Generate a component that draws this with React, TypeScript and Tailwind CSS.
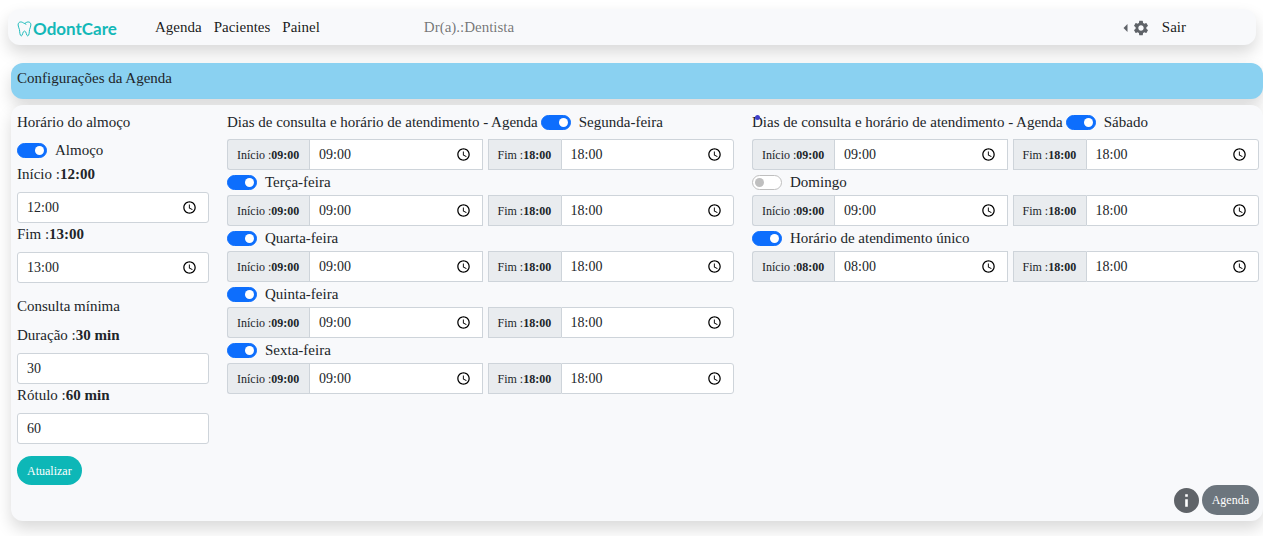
import { useState } from "react";
import { MdSchedule, MdSettings } from "react-icons/md";

interface Day {
  id: string;
  name: string;
  start: string;
  end: string;
  enabled: boolean;
}

const WEEK: Day[] = [
  { id: "seg", name: "Segunda-feira", start: "09:00", end: "18:00", enabled: true },
  { id: "ter", name: "Terça-feira", start: "09:00", end: "18:00", enabled: true },
  { id: "qua", name: "Quarta-feira", start: "09:00", end: "18:00", enabled: true },
  { id: "qui", name: "Quinta-feira", start: "09:00", end: "18:00", enabled: true },
  { id: "sex", name: "Sexta-feira", start: "09:00", end: "18:00", enabled: true },
];

const WEEKEND: Day[] = [
  { id: "sab", name: "Sábado", start: "09:00", end: "18:00", enabled: true },
  { id: "dom", name: "Domingo", start: "09:00", end: "18:00", enabled: false },
  { id: "unico", name: "Horário de atendimento único", start: "08:00", end: "18:00", enabled: true },
];

function Logo() {
  return (
    <a href="#" className="flex w-[138px] items-center gap-px pt-1 text-[#14b8b8]">
      <svg width="15" height="16" viewBox="0 0 15 17" fill="none" stroke="currentColor" strokeLinejoin="round">
        <path d="M7.5 2.6C6 2 5.2 1 3.600 1C1.800 1 .7 2.300.7 4.200c0 1.900 1 2.900 1.400 4.800.4 2 .3 6.700 1.900 6.900 1.700.1 1.300-5.200 3.500-5.200s1.800 5.300 3.500 5.200c1.600-.2 1.500-4.900 1.900-6.900.4-1.900 1.400-2.900 1.400-4.800C14.300 2.300 13.200 1 11.400 1 9.800 1 9 2 7.500 2.600Zm0 0 1.900 1" />
      </svg>
      <span className="font-[Lato,sans-serif] text-[17px] leading-5 font-bold">OdontCare</span>
    </a>
  );
}

function Switch({ id, label, defaultChecked }: { id: string; label: string; defaultChecked: boolean }) {
  const [on, setOn] = useState(defaultChecked);

  return (
    <div className="flex items-center gap-2">
      <span className="relative flex h-[15px] w-[30px]">
        <input
          id={id}
          type="checkbox"
          role="switch"
          checked={on}
          onChange={(e) => setOn(e.target.checked)}
          className="h-[15px] w-[30px] appearance-none rounded-full border border-[#bfbfbf] bg-white checked:border-[#0d6efd] checked:bg-[#0d6efd]"
        />
        <span
          className={`pointer-events-none absolute top-[3px] size-[9px] rounded-full ${
            on ? "right-[3px] bg-white" : "left-[3px] bg-[#bfbfbf]"
          }`}
        />
      </span>
      <label htmlFor={id}>{label}</label>
    </div>
  );
}

function TimeInput({ id, value, className = "" }: { id: string; value: string; className?: string }) {
  return (
    <div className={`flex h-[31px] min-w-0 items-center border border-[#ced4da] bg-white pr-[11px] ${className}`}>
      <input
        id={id}
        type="text"
        defaultValue={value}
        className="h-full w-full min-w-0 bg-transparent pl-[9px] text-sm outline-none"
      />
      <button type="button" aria-label="Escolher horário" className="shrink-0 text-black">
        <MdSchedule size={15} />
      </button>
    </div>
  );
}

function Addon({ htmlFor, text, value, className = "" }: { htmlFor: string; text: string; value: string; className?: string }) {
  return (
    <label
      htmlFor={htmlFor}
      className={`flex shrink-0 items-center border border-r-0 border-[#ced4da] bg-[#e9ecef] px-[9px] text-xs whitespace-pre ${className}`}
    >
      {text} :<b>{value}</b>
    </label>
  );
}

function DayRow({ day }: { day: Day }) {
  return (
    <div className="flex">
      <Addon htmlFor={`${day.id}-inicio`} text="Início" value={day.start} className="w-[82px] rounded-l-[3px]" />
      <TimeInput id={`${day.id}-inicio`} value={day.start} className="mr-[5px] flex-1" />
      <Addon htmlFor={`${day.id}-fim`} text="Fim" value={day.end} className="w-[73px]" />
      <TimeInput id={`${day.id}-fim`} value={day.end} className="flex-1 rounded-r-[3px]" />
    </div>
  );
}

function Schedule({ days, marker }: { days: Day[]; marker?: boolean }) {
  return (
    <section className="relative">
      {marker && <span className="absolute top-1 left-[3px] size-[5px] rounded-full bg-[#3f3fc8]" />}
      {days.map((day, i) => (
        <div key={day.id}>
          {i === 0 ? (
            <div className="mb-[5px] flex h-[23px] items-center gap-[3px] whitespace-nowrap">
              <h2>Dias de consulta e horário de atendimento - Agenda</h2>
              <Switch id={day.id} label={day.name} defaultChecked={day.enabled} />
            </div>
          ) : (
            <div className="flex h-[25px] items-center">
              <Switch id={day.id} label={day.name} defaultChecked={day.enabled} />
            </div>
          )}
          <DayRow day={day} />
        </div>
      ))}
    </section>
  );
}

export default function App() {
  const textInput = "block h-[31px] w-full rounded-[3px] border border-[#ced4da] bg-white px-[9px] text-sm outline-none";

  return (
    <div className="pt-[9px] pb-4 font-['Liberation_Serif',serif] text-[15px] leading-[23px] text-[#212529]">
      <nav className="mr-[7px] ml-2 flex h-9 items-center rounded-xl bg-[#f8f9fb] pr-[70px] pl-[9px] shadow-[0_8px_16px_rgba(0,0,0,0.15)]">
        <Logo />
        <div className="flex gap-3 text-black/90">
          <a href="#">Agenda</a>
          <a href="#">Pacientes</a>
          <a href="#">Painel</a>
        </div>
        <span className="ml-[104px] text-black/55">Dr(a).:Dentista</span>
        <div className="ml-auto flex items-center">
          <button type="button" aria-label="Configurações" className="flex items-center gap-1 pt-0.5 text-[#5f6368]">
            <svg width="5" height="8" viewBox="0 0 5 8" fill="currentColor">
              <path d="M4.500 0v8L.5 4Z" />
            </svg>
            <MdSettings size={18} />
          </button>
          <a href="#" className="ml-3 text-black/90">
            Sair
          </a>
        </div>
      </nav>

      <header className="mt-[18px] ml-[11px] h-9 rounded-xl bg-[#8ad1f1] px-1.5 pt-1 shadow-[0_8px_16px_rgba(0,0,0,0.15)]">
        <h1>Configurações da Agenda</h1>
      </header>

      <main className="mt-1.5 ml-[11px] rounded-xl bg-[#f8f9fb] pt-1.5 pr-1 pb-1.5 pl-1.5 shadow-[0_8px_16px_rgba(0,0,0,0.15)]">
        <div className="grid grid-cols-[192px_1fr_1fr] gap-[18px]">
          <form onSubmit={(e) => e.preventDefault()}>
            <h2 className="mb-[5px]">Horário do almoço</h2>
            <Switch id="almoco" label="Almoço" defaultChecked />
            <label htmlFor="almoco-inicio" className="mt-px mb-1.5 block">
              Início :<b>12:00</b>
            </label>
            <TimeInput id="almoco-inicio" value="12:00" className="rounded-[3px]" />
            <label htmlFor="almoco-fim" className="mb-1.5 block">
              Fim :<b>13:00</b>
            </label>
            <TimeInput id="almoco-fim" value="13:00" className="rounded-[3px]" />

            <h2 className="mt-3 mb-1.5">Consulta mínima</h2>
            <label htmlFor="duracao" className="mb-1.5 block">
              Duração :<b>30 min</b>
            </label>
            <input id="duracao" type="text" defaultValue="30" className={textInput} />
            <label htmlFor="rotulo" className="mb-1.5 block">
              Rótulo :<b>60 min</b>
            </label>
            <input id="rotulo" type="text" defaultValue="60" className={textInput} />
            <button type="submit" className="mt-3 h-[29px] rounded-full bg-[#0db7b7] px-2.5 text-xs text-white">
              Atualizar
            </button>
          </form>

          <Schedule days={WEEK} />
          <Schedule days={WEEKEND} marker />
        </div>

        <div className="flex items-center justify-end gap-[3px]">
          <button type="button" aria-label="Informações">
            <svg width="25" height="25" viewBox="0 0 25 25">
              <circle cx="12.500" cy="12.500" r="12.500" fill="#5f6368" />
              <path d="M11.200 6.200h2.600v2.600h-2.600zM11.200 11.200h2.600v7.600h-2.600z" fill="#fff" />
            </svg>
          </button>
          <button type="button" className="h-[30px] rounded-full bg-[#6c757d] px-2.5 text-xs text-white">
            Agenda
          </button>
        </div>
      </main>
    </div>
  );
}
